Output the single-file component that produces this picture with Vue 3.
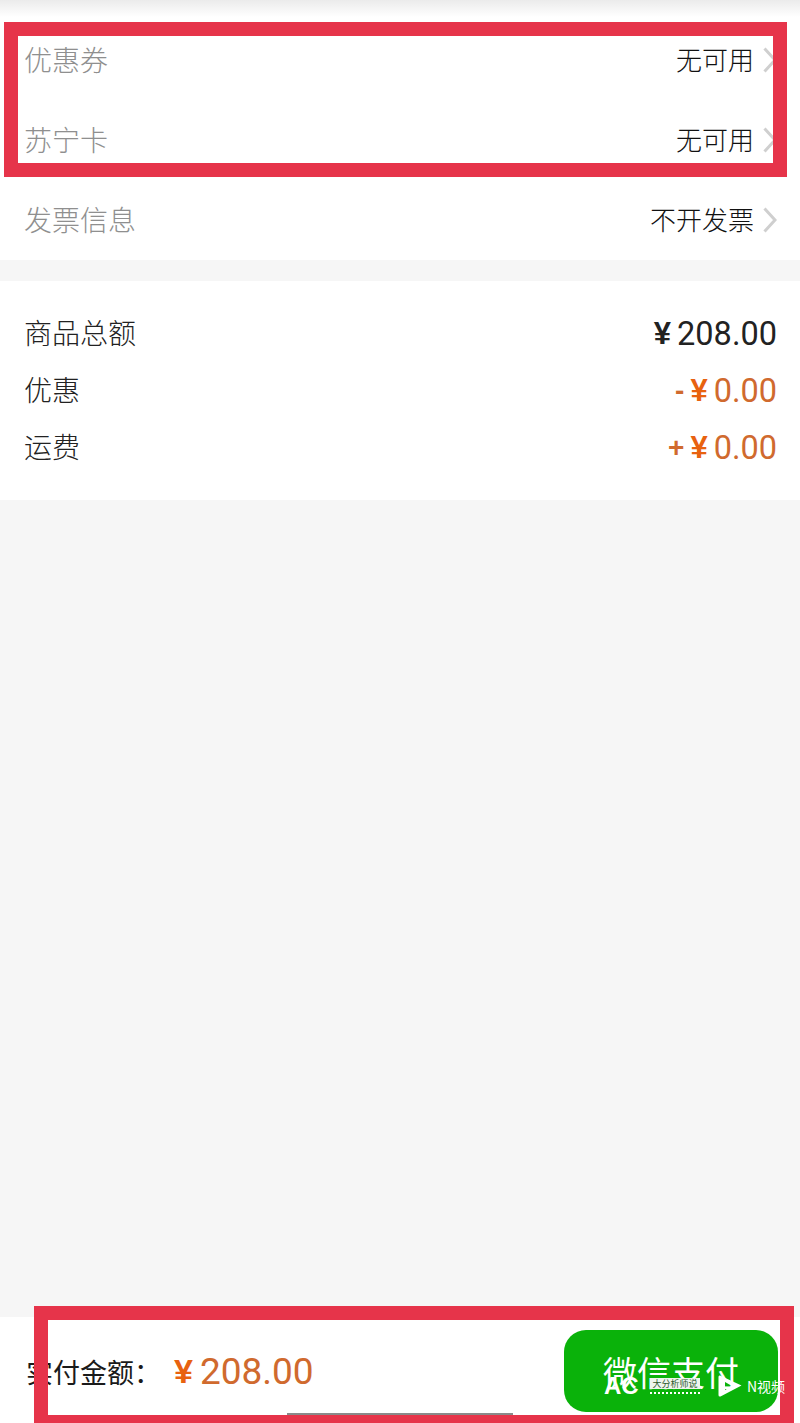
<script setup>
const options = [
  { label: '优惠券', value: '无可用' },
  { label: '苏宁卡', value: '无可用' },
  { label: '发票信息', value: '不开发票' }
]
const totals = [
  { label: '商品总额', sign: '', amount: '208.00', accent: false },
  { label: '优惠', sign: '-', amount: '0.00', accent: true },
  { label: '运费', sign: '+', amount: '0.00', accent: true }
]
</script>

<template>
  <div class="page">
    <div class="top-shade"></div>
    <section class="options">
      <div v-for="o in options" :key="o.label" class="option">
        <span class="option-label">{{ o.label }}</span>
        <span class="option-value">{{ o.value }}</span>
        <svg class="chevron" width="14" height="26" viewBox="0 0 14 26">
          <path d="M1.5 1.5 L12 13 L1.5 24.5" fill="none" stroke="#cfcfcf" stroke-width="3" />
        </svg>
      </div>
    </section>
    <section class="totals">
      <div v-for="t in totals" :key="t.label" class="total">
        <span class="total-label">{{ t.label }}</span>
        <span class="total-value" :class="{ accent: t.accent }">
          <span v-if="t.sign" class="sign">{{ t.sign }}</span>
          <span class="yen">¥</span>
          <span class="digits">{{ t.amount }}</span>
        </span>
      </div>
    </section>
    <div class="spacer"></div>
    <footer class="footer">
      <span class="pay-label">实付金额：</span>
      <span class="pay-amount">
        <span class="pay-yen">¥</span>
        <span class="pay-digits">208.00</span>
      </span>
      <button class="pay-button">微信支付</button>
    </footer>

    <div class="handle"></div>
    <div class="mark mark-top"></div>
    <div class="mark mark-bottom"></div>

    <div class="watermark">
      <span class="wm-logo">AC</span>
      <span class="wm-brand">
        <span class="wm-box">大分析师说</span>
        <span class="wm-dots"></span>
      </span>
      <svg class="wm-play" width="24" height="22" viewBox="0 0 24 22">
        <path fill-rule="evenodd" d="M2 0.5 L23.5 10.5 L2.5 21.5 Q0.5 22 0.5 20 L0.5 2 Q0.5 0 2 0.5 Z M7 7 L7 15 L14 11 Z" fill="#fff" />
      </svg>
      <span class="wm-name">N视频</span>
    </div>
  </div>
</template>

<style scoped>
.page {
  position: relative;
  width: 800px;
  height: 1423px;
  display: flex;
  flex-direction: column;
  overflow: hidden;
  background: #f6f6f6;
  font-family: "Noto Sans CJK SC", "Liberation Sans", sans-serif;
}
.top-shade {
  height: 20px;
  flex: none;
  background: linear-gradient(#ebebeb, #ffffff 85%);
}
.options {
  flex: none;
  background: #fff;
}
.option {
  height: 80px;
  display: flex;
  align-items: center;
  padding: 0 23px 0 24px;
  box-sizing: border-box;
}
.option-label {
  font-size: 28px;
  font-weight: 300;
  color: #8f8f8f;
  flex: 1;
  padding-bottom: 3px;
}
.option-value {
  font-size: 26px;
  font-weight: 300;
  color: #111;
  padding-bottom: 3px;
}
.chevron {
  margin-left: 9px;
}
.totals {
  flex: none;
  margin-top: 21px;
  height: 219px;
  box-sizing: border-box;
  padding-top: 24px;
  background: #fff;
}
.total {
  height: 57px;
  display: flex;
  align-items: center;
  justify-content: space-between;
  padding: 0 23px 0 24px;
}
.total-label {
  font-size: 28px;
  font-weight: 300;
  color: #222;
  padding-bottom: 4px;
}
.total-value {
  display: flex;
  align-items: center;
  color: #222;
}
.total-value.accent {
  color: #d06a2e;
}
.sign {
  font-family: "Liberation Sans", sans-serif;
  font-size: 28px;
  font-weight: 700;
  margin-right: 6px;
}
.yen {
  font-family: "Liberation Sans", sans-serif;
  font-size: 31px;
  font-weight: 700;
  margin-right: 6px;
}
.accent .yen {
  color: #e8620f;
}
.digits {
  font-family: Roboto, "Liberation Sans", sans-serif;
  font-size: 32.5px;
  font-weight: 400;
}
.spacer {
  flex: 1;
}
.footer {
  flex: none;
  height: 106px;
  box-sizing: border-box;
  padding: 13px 22px 11px 26px;
  display: flex;
  align-items: center;
  background: #fff;
}
.pay-label {
  font-size: 27px;
  width: 148px;
  color: #1a1a1a;
}
.pay-amount {
  display: flex;
  align-items: center;
  flex: 1;
  color: #d06a2e;
}
.pay-yen {
  font-family: "Liberation Sans", sans-serif;
  font-size: 34px;
  font-weight: 700;
  color: #e8620f;
  margin-right: 7px;
}
.pay-digits {
  font-family: Roboto, "Liberation Sans", sans-serif;
  font-size: 37px;
  font-weight: 400;
}
.pay-button {
  width: 214px;
  height: 82px;
  border: none;
  border-radius: 22px;
  background: #0ab20a;
  color: #fff;
  font-family: inherit;
  font-size: 34px;
  padding: 0;
}
.handle {
  position: absolute;
  left: 287px;
  top: 1413px;
  width: 226px;
  height: 3px;
  background: #8a8a8a;
}
.mark {
  position: absolute;
  box-sizing: border-box;
  border: 14px solid #e6344a;
}
.mark-top {
  left: 4px;
  top: 22px;
  width: 783px;
  height: 155px;
}
.mark-bottom {
  left: 34px;
  top: 1306px;
  width: 760px;
  height: 117px;
  border-bottom-width: 8px;
}
.watermark {
  position: absolute;
  left: 604px;
  top: 1374px;
  width: 190px;
  height: 24px;
  color: #fff;
  display: flex;
  align-items: center;
}
.wm-logo {
  width: 46px;
  flex: none;
  font-family: "Liberation Sans", sans-serif;
  font-size: 24px;
  font-weight: 700;
}
.wm-brand {
  width: 50px;
  flex: none;
  display: flex;
  flex-direction: column;
  gap: 3px;
}
.wm-box {
  height: 11px;
  background: #eef5ee;
  color: #2d5a2d;
  font-size: 9px;
  line-height: 11px;
  text-align: center;
  white-space: nowrap;
  overflow: hidden;
}
.wm-dots {
  height: 2px;
  border-top: 2px dotted #fff;
  box-sizing: border-box;
}
.wm-play {
  margin-left: 18px;
  flex: none;
}
.wm-name {
  margin-left: 5px;
  font-size: 14px;
  white-space: nowrap;
}
</style>
